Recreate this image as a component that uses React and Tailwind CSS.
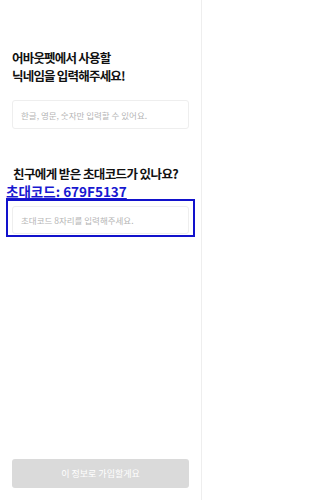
import React from "react"

function App() {
  return (
    <div className="w-[202px] min-h-[500px] border-r border-[#eeeeee] bg-white flex flex-col" style={{ fontFamily: '"Noto Sans CJK KR", "Noto Sans", sans-serif' }}>
      <div className="px-3 pt-[49px]">
        <h1 className="text-[12.5px] font-bold leading-[18px] tracking-[-0.8px] text-[#111]">
          어바웃펫에서 사용할
          <br />
          닉네임을 입력해주세요!
        </h1>
        <input
          className="mt-[15px] w-full h-[29px] border border-[#eeeeee] rounded-[3px] px-2 text-[8.5px] outline-none placeholder:text-[#b5b5b5]"
          placeholder="한글, 영문, 숫자만 입력할 수 있어요."
        />
      </div>

      <div className="pt-[36px]">
        <h2 className="px-[13px] text-[12.5px] font-bold leading-[18px] tracking-[-0.6px] whitespace-nowrap text-[#111]">친구에게 받은 초대코드가 있나요?</h2>
        <div className="px-[6px] text-[13.5px] font-bold leading-[16px] text-[#1818d0] underline">초대코드: 679F5137</div>
        <div className="mx-[6px] border-2 border-[#1212cc] px-1 pt-1 pb-[1px]">
          <input
            className="w-full h-[28px] border border-[#eeeeee] rounded-[3px] px-2 text-[8.5px] outline-none placeholder:text-[#b5b5b5]"
            placeholder="초대코드 8자리를 입력해주세요."
          />
        </div>
      </div>

      <div className="mt-auto px-3 pb-3">
        <button className="w-full h-[29px] rounded-[3px] bg-[#dadada] text-white text-[9px]">이 정보로 가입할게요</button>
      </div>
    </div>
  )
}

export default App
